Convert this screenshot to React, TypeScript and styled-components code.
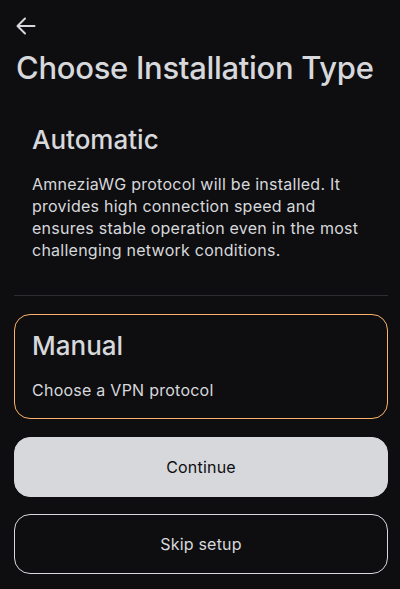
import * as React from "react";
import styled, { createGlobalStyle } from "styled-components";

const GlobalStyle = createGlobalStyle`
    html, body {
        margin: 0;
        padding: 0;
        background: #0e0e11;
    }
    body {
        font-family: Inter, "Noto Sans", sans-serif;
        -webkit-font-smoothing: antialiased;
    }
`;

const Page = styled.div`
    width: 400px;
    height: 589px;
    box-sizing: border-box;
    padding: 14px 12px 0 14px;
    display: flex;
    flex-direction: column;
    background: #0e0e11;
    overflow: hidden;
`;

const BackButton = styled.button`
    width: 24px;
    height: 24px;
    padding: 0;
    margin: 0;
    border: none;
    background: transparent;
    color: #d7d8db;
    display: flex;
    align-items: center;
    justify-content: center;
    cursor: pointer;
`;

const Title = styled.h1`
    margin: 10px 0 0 2px;
    font-size: 31px;
    line-height: 40px;
    font-weight: 500;
    letter-spacing: -0.3px;
    color: #d7d8db;
    white-space: nowrap;
`;

const Card = styled.div<{ selected?: boolean }>`
    box-sizing: border-box;
    border-radius: 16px;
    border: 1px solid ${props => props.selected ? "#fbb26a" : "transparent"};
    padding: 15px 17px 17px;
    display: flex;
    flex-direction: column;
    gap: 17px;
`;

const AutoCard = styled(Card)`
    margin-top: 20px;
`;

const CardTitle = styled.h2`
    margin: 0;
    font-size: 26px;
    line-height: 32px;
    font-weight: 500;
    color: #d7d8db;
`;

const CardText = styled.p`
    margin: 0;
    font-size: 16px;
    line-height: 22px;
    font-weight: 400;
    letter-spacing: 0.25px;
    color: #d7d8db;
`;

const Divider = styled.div`
    height: 1px;
    background: #2c2d30;
    margin: 16px 0 18px;
`;

const ButtonStack = styled.div`
    display: flex;
    flex-direction: column;
    gap: 17px;
    margin-top: 18px;
`;

const Button = styled.button<{ variant: "filled" | "outline" }>`
    box-sizing: border-box;
    height: 60px;
    width: 100%;
    border-radius: 16px;
    font-family: Inter, "Noto Sans", sans-serif;
    font-size: 16px;
    font-weight: 400;
    letter-spacing: 0.2px;
    cursor: pointer;
    background: ${props => props.variant === "filled" ? "#d7d8db" : "transparent"};
    color: ${props => props.variant === "filled" ? "#0e0e11" : "#d7d8db"};
    border: 1px solid #d7d8db;
`;

const ArrowLeft = () => (
    <svg width="24" height="24" viewBox="0 0 24 24" fill="none" stroke="currentColor" strokeWidth="2" strokeLinecap="round" strokeLinejoin="round">
        <path d="M20.5 12H4" />
        <path d="M11 4.5L3.5 12l7.5 7.5" />
    </svg>
);

const App = () => {
    return (
        <>
            <GlobalStyle />
            <Page>
                <BackButton aria-label="back">
                    <ArrowLeft />
                </BackButton>
                <Title>Choose Installation Type</Title>
                <AutoCard>
                    <CardTitle>Automatic</CardTitle>
                    <CardText>
                        AmneziaWG protocol will be installed. It provides high connection speed and ensures stable operation even in the most challenging network conditions.
                    </CardText>
                </AutoCard>
                <Divider />
                <Card selected>
                    <CardTitle>Manual</CardTitle>
                    <CardText>Choose a VPN protocol</CardText>
                </Card>
                <ButtonStack>
                    <Button variant="filled">Continue</Button>
                    <Button variant="outline">Skip setup</Button>
                </ButtonStack>
            </Page>
        </>
    );
};

export default App;
